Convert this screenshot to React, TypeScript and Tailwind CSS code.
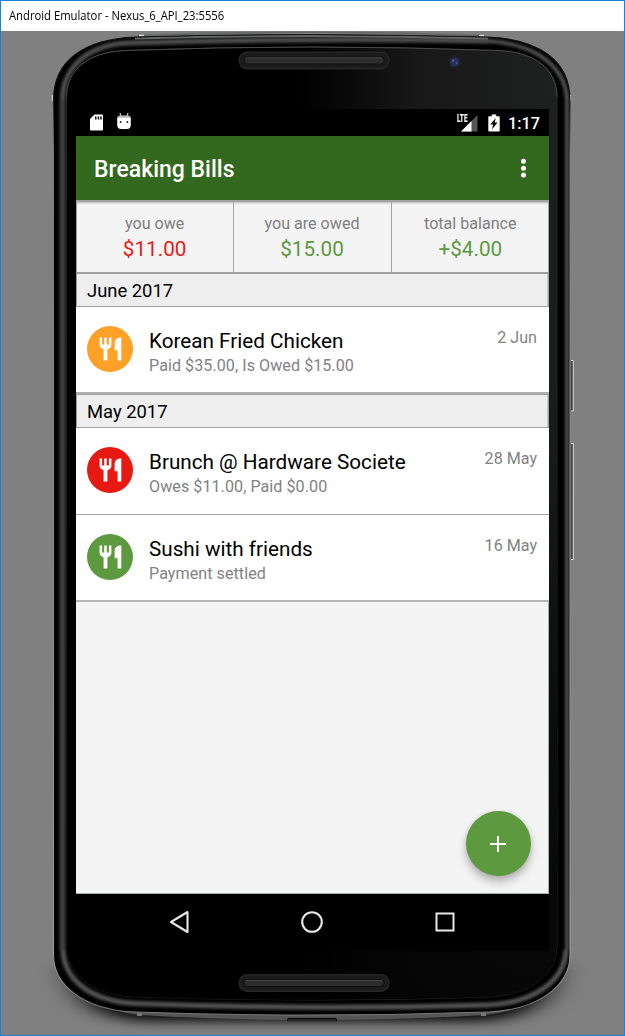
import React from "react";

const OUTER =
  "M53.5 100 C53.5 60 85 39 135 37 Q312 32 488 37 C538 39 570 60 570 100 V955 C570 986 538 1010 488 1012 Q312 1018 135 1012 C85 1010 53.5 986 53.5 955Z";
const INNER =
  "M66.5 97 C66.5 70 88 52 125 50.5 Q312 43.5 498 50.5 C536 52 557 70 557 97 V945 C557 972 535 994 490 997 Q312 1003 135 997 C88 994 66.5 972 66.5 945Z";

function Slot({ y }: { y: number }) {
  return (
    <g>
      <rect x="238.5" y={y} width="151" height="18" rx="8.5" fill="#252525" />
      <rect x="240" y={y + 1.5} width="148" height="14.5" rx="7" fill="#1b1b1b" />
      <rect x="243.5" y={y + 5} width="141" height="8" rx="4" fill="#111" />
      <rect x="244.5" y={y + 6} width="139" height="6" rx="3" fill="#2c2c2c" />
      <rect x="246" y={y + 6} width="136" height="1" fill="#464646" />
    </g>
  );
}

function DeviceFrame() {
  return (
    <svg className="absolute inset-0" width="625" height="1036" viewBox="0 0 625 1036" aria-hidden="true">
      <defs>
        <filter id="soft" filterUnits="userSpaceOnUse" x="-60" y="850" width="745" height="250">
          <feGaussianBlur stdDeviation="16 6" />
        </filter>
        <filter id="bevel" filterUnits="userSpaceOnUse" x="0" y="0" width="625" height="1036">
          <feGaussianBlur stdDeviation="1.6" />
        </filter>
        <clipPath id="stage">
          <rect x="1" y="31" width="623" height="1004" />
        </clipPath>
        <clipPath id="body">
          <path d={OUTER} />
        </clipPath>
        <linearGradient id="sheen" gradientUnits="userSpaceOnUse" x1="300" y1="0" x2="557" y2="0">
          <stop offset="0" stopColor="#000" />
          <stop offset=".45" stopColor="#181818" />
          <stop offset="1" stopColor="#1f2020" />
        </linearGradient>
        <linearGradient id="fall" gradientUnits="userSpaceOnUse" x1="0" y1="45" x2="0" y2="1000">
          <stop offset="0" stopColor="#000" stopOpacity="0" />
          <stop offset=".35" stopColor="#000" stopOpacity=".1" />
          <stop offset=".7" stopColor="#000" stopOpacity=".6" />
          <stop offset="1" stopColor="#000" stopOpacity=".8" />
        </linearGradient>
        <linearGradient id="rim" gradientUnits="userSpaceOnUse" x1="0" y1="34" x2="0" y2="1016">
          <stop offset="0" stopColor="#151515" />
          <stop offset=".06" stopColor="#111" />
          <stop offset=".12" stopColor="#777" />
          <stop offset=".93" stopColor="#9a9a9a" />
          <stop offset="1" stopColor="#777" />
        </linearGradient>
      </defs>
      <rect x="1" y="31" width="623" height="1004" fill="#808080" />
      <g clipPath="url(#stage)">
        <path d="M72 965 C76 1005 100 1017 140 1021 H485 C525 1017 550 1005 554 965Z" fill="#000" filter="url(#soft)" />
        <path d="M138 35.6 Q312 29 484 35.6" fill="none" stroke="#646864" strokeWidth="1.6" />
        <path d="M139 35.5h5M479 35.5h5" stroke="#ddd" strokeWidth="1.5" />
        <path d="M52.5 95v6M570.5 95v6" stroke="#ccc" strokeWidth="1.4" />
        <rect x="569.5" y="360.5" width="4" height="51" rx="1" fill="#666" />
        <path d="M571.5 361v50" stroke="#444" strokeWidth="1" />
        <path d="M573.5 361v50" stroke="#c0c0c0" strokeWidth="1" />
        <path d="M571 360.500h2.500M571 411h2.500" stroke="#ddd" strokeWidth="1" />
        <rect x="569.5" y="443" width="4" height="117" rx="1" fill="#666" />
        <path d="M571.5 444v115" stroke="#444" strokeWidth="1" />
        <path d="M573.5 443.5v116" stroke="#c5c5c5" strokeWidth="1" />
        <path d="M571 443.500h2.500M571 559.500h2.500" stroke="#ddd" strokeWidth="1" />
        <path d="M92 1001 Q112 1012 140 1015 Q312 1025 485 1015 Q513 1012 533 1001Z" fill="#555" />
        <path d="M137 1014.500h5M481 1014.500h5" stroke="#777" strokeWidth="3" />
        <path d="M287 1021.500v-2q0-1 1.500-1h47q1.500 0 1.500 1v2z" fill="#282828" />
        <path d="M287.500 1021v-1.500q0-1 1.500-1h46q1.500 0 1.500 1v1.500" fill="none" stroke="#050505" strokeWidth="1" />
      </g>
      <path d={OUTER} fill="#000" />
      <g clipPath="url(#body)">
        <g filter="url(#bevel)">
          <path d="M62.500 100 C62.500 70 85 45 128 43 Q312 37.500 488 41" fill="none" stroke="#505050" strokeWidth="5" />
          <path d="M488 41 C540 44 566 70 567 100 V950" fill="none" stroke="#5a5a5a" strokeWidth="3.500" />
          <path d="M62.500 100V950" fill="none" stroke="#3f3f3f" strokeWidth="6" />
          <path d="M63 950 C64 978 88 1001 135 1003.500 Q312 1010 488 1005 C535 1003 565 980 566 950" fill="none" stroke="#555" strokeWidth="5" />
        </g>
        <path d="M135 38.600 Q312 33.500 488 38.600" fill="none" stroke="#666" strokeWidth="2" />
      </g>
      <path d={OUTER} fill="none" stroke="url(#rim)" strokeWidth="1.100" />
      <path d={INNER} fill="url(#sheen)" stroke="#222" strokeWidth="1" />
      <path d={INNER} fill="url(#fall)" />
      <path d="M66.500 97 C66.500 70 88 52 125 50.500 Q312 43.500 498 50.500 C536 52 557 70 557 97" fill="none" stroke="#4a4a4a" strokeWidth="1" />
      <Slot y={51.500} />
      <Slot y={974} />
      <circle cx="455" cy="62" r="8" fill="#1c1c1d" />
      <circle cx="455" cy="62" r="5.800" fill="#1b2030" />
      <circle cx="454.500" cy="62" r="4.500" fill="#27325a" />
      <circle cx="453" cy="60.500" r="1" fill="#5a6aa0" />
      <circle cx="456.500" cy="63" r="1" fill="#46558a" />
    </svg>
  );
}

function StatusBar() {
  return (
    <div className="flex h-[27px] shrink-0 items-center bg-black pr-[10px] pl-[13px] text-white">
      <svg width="15" height="19" viewBox="0 0 15 19">
        <path d="M5.500 1.500H13q1 0 1 1v14q0 1-1 1H2q-1 0-1-1V6z" fill="#fff" />
        <path d="M6 3.500h1.500v3H6zM8.700 3.500h1.500v3H8.700zM11.200 3.500h1.500v3h-1.500z" fill="#111" />
      </svg>
      <svg className="-mt-[3px] ml-[12px]" width="16" height="19" viewBox="0 0 16 19">
        <path d="M4 1l1 3M12 1l-1 3" stroke="#ccc" strokeWidth="1.100" />
        <path d="M4 3.500h8q2.500 0 2.700 2.300H1.300Q1.500 3.500 4 3.500z" fill="#bbb" />
        <path d="M1.200 5.500h13.600v7q0 4.500-4 4.500H5.200q-4 0-4-4.500z" fill="#fff" />
        <circle cx="4.600" cy="10" r=".9" fill="#111" />
        <circle cx="11.400" cy="10" r=".9" fill="#111" />
      </svg>
      <div className="relative ml-auto h-[18px] w-[21px]">
        <svg width="21" height="18" viewBox="0 0 21 18">
          <path d="M20.500 1v16.500H4z" fill="#555" />
          <path d="M14.500 7v10.500H4z" fill="#fff" />
        </svg>
        <span className="absolute top-0 left-0 origin-left scale-x-[.65] bg-black text-[10px] leading-[9px] font-black">LTE</span>
      </div>
      <svg className="ml-[10px]" width="12" height="18" viewBox="0 0 12 18">
        <path d="M1 2.200h2.800V.5h4.400v1.700H11q.7 0 .7.800v13.500q0 1-.9 1H1.200q-.9 0-.9-1V3q0-.8.700-.8z" fill="#fff" />
        <path d="M7.700 4L2.300 10.500H5.200L4 15.500l5.500-7H6.700z" fill="#000" />
      </svg>
      <span className="mt-px ml-[8px] w-[31px] text-[16.2px] leading-[27px] font-medium whitespace-nowrap">1:17</span>
    </div>
  );
}

function AppBar() {
  return (
    <div className="flex h-16 shrink-0 items-center justify-between bg-[#33691e] pr-[22px] pl-[18px]">
      <h1 className="pt-[4px] text-[23px] font-medium text-white">Breaking Bills</h1>
      <svg width="7" height="20" viewBox="0 0 7 20" fill="#fff">
        <circle cx="3.500" cy="3.300" r="2.500" />
        <circle cx="3.500" cy="10.200" r="2.500" />
        <circle cx="3.500" cy="17.100" r="2.500" />
      </svg>
    </div>
  );
}

function Stat({ label, value, tone, edge }: { label: string; value: string; tone: string; edge: string }) {
  return (
    <div className={`flex flex-col items-center border-r border-[#a3a3a3] pt-3 ${edge}`}>
      <span className="text-[16.1px] leading-[22px] text-[#808080]">{label}</span>
      <span className={`text-[20.7px] leading-[28px] ${tone}`}>{value}</span>
    </div>
  );
}

function MonthHeader({ children }: { children: React.ReactNode }) {
  return (
    <div className="h-[34px] shrink-0 border border-[#a0a0a0] bg-[#eee] pl-[10px] text-[18.4px] leading-[34px] text-black shadow-[inset_-1px_0_#c9c9c9]">
      {children}
    </div>
  );
}

function Bill({ title, note, date, color, border }: { title: string; note: string; date: string; color: string; border: string }) {
  return (
    <div className={`flex h-[87px] shrink-0 bg-white pr-3 pl-[11px] ${border}`}>
      <div className={`mt-[18.5px] flex size-[46px] items-center justify-center rounded-full ${color}`}>
        <svg width="24" height="24" viewBox="0 0 24 24" fill="#fff">
          <path d="M1.600 .5h2.500V7.500h2.100V.500h2.600V7.500h2.100V.500h2.500V7.500q0 3.800-4 4.700V23.500H5.600V12.200Q1.600 11.300 1.600 7.500z" />
          <path d="M23.300.500V23.500h-3.700V13.300H16.600V6q0-4.500 4.700-5.500z" />
        </svg>
      </div>
      <div className="flex flex-1 flex-col pt-[21px] pl-4">
        <span className="text-[20.7px] leading-[26px] text-black">{title}</span>
        <span className="text-[16.1px] leading-[24px] tracking-[.06px] text-[#828282]">{note}</span>
      </div>
      <span className="pt-[19px] text-[16.1px] leading-[24px] text-[#828282]">{date}</span>
    </div>
  );
}

export default function App() {
  return (
    <div className="relative flex h-[1036px] w-[625px] flex-col overflow-hidden bg-[#808080]">
      <DeviceFrame />
      <div className="relative h-[31px] shrink-0 bg-white pt-px pl-[9px] font-['Open_Sans','Noto_Sans',sans-serif] text-[12px] leading-[30px] whitespace-nowrap text-black">
        <span className="inline-block origin-left scale-x-[.938]">Android Emulator - Nexus_6_API_23:5556</span>
      </div>
      <main className="relative mt-[78px] ml-[76px] flex h-[842px] w-[473px] flex-col overflow-hidden bg-black font-[Roboto,sans-serif]">
        <StatusBar />
        <AppBar />
        <div className="relative flex h-[694px] shrink-0 flex-col border-r border-b border-[#a9b0ad] bg-[#f4f4f4]">
          <div className="-mr-px grid h-[73px] shrink-0 grid-cols-3 border-y border-l border-[#a0a0a0] shadow-[inset_0_3px_3px_-2px_#777]">
            <Stat label="you owe" value="$11.00" tone="text-[#e91b16]" edge="pr-px" />
            <Stat label="you are owed" value="$15.00" tone="text-[#5c993f]" edge="pr-px" />
            <Stat label="total balance" value="+$4.00" tone="text-[#5c993f]" edge="pl-px" />
          </div>
          <div className="-mr-px flex flex-col">
            <MonthHeader>June 2017</MonthHeader>
            <Bill title="Korean Fried Chicken" note="Paid $35.00, Is Owed $15.00" date="2 Jun" color="bg-[#ffa126]" border="border-b-2 border-[#b0b0b0]" />
            <MonthHeader>May 2017</MonthHeader>
            <Bill title="Brunch @ Hardware Societe" note="Owes $11.00, Paid $0.00" date="28 May" color="bg-[#e81812]" border="border-b border-[#a5a5a5]" />
            <Bill title="Sushi with friends" note="Payment settled" date="16 May" color="bg-[#5c993f]" border="border-b-2 border-[#b5b5b5]" />
          </div>
          <button className="absolute right-[17.500px] bottom-[17px] flex size-[65px] items-center justify-center rounded-full bg-[#5c993f] shadow-[0_6px_10px_rgba(0,0,0,0.25),0_1px_5px_rgba(0,0,0,0.1)]" aria-label="Add">
            <svg width="16" height="16" viewBox="0 0 16 16">
              <path d="M8 0v16M0 8h16" stroke="#fff" strokeWidth="2" />
            </svg>
          </button>
        </div>
        <nav className="flex h-[56px] shrink-0 items-center justify-between pr-[94px] pl-[93px]">
          <svg width="21" height="24" viewBox="0 0 21 24">
            <path d="M2 12L18.500 2v20z" fill="none" stroke="#e8e8e8" strokeWidth="2.100" strokeLinejoin="round" />
          </svg>
          <svg className="-ml-px" width="24" height="24" viewBox="0 0 24 24">
            <circle cx="12" cy="12" r="9.800" fill="none" stroke="#e8e8e8" strokeWidth="2.100" />
          </svg>
          <svg width="20" height="20" viewBox="0 0 20 20">
            <rect x="1.500" y="1.500" width="17" height="17" fill="none" stroke="#e8e8e8" strokeWidth="2" />
          </svg>
        </nav>
      </main>
      <div className="pointer-events-none absolute inset-0 border border-[#1883d7]" />
    </div>
  );
}
